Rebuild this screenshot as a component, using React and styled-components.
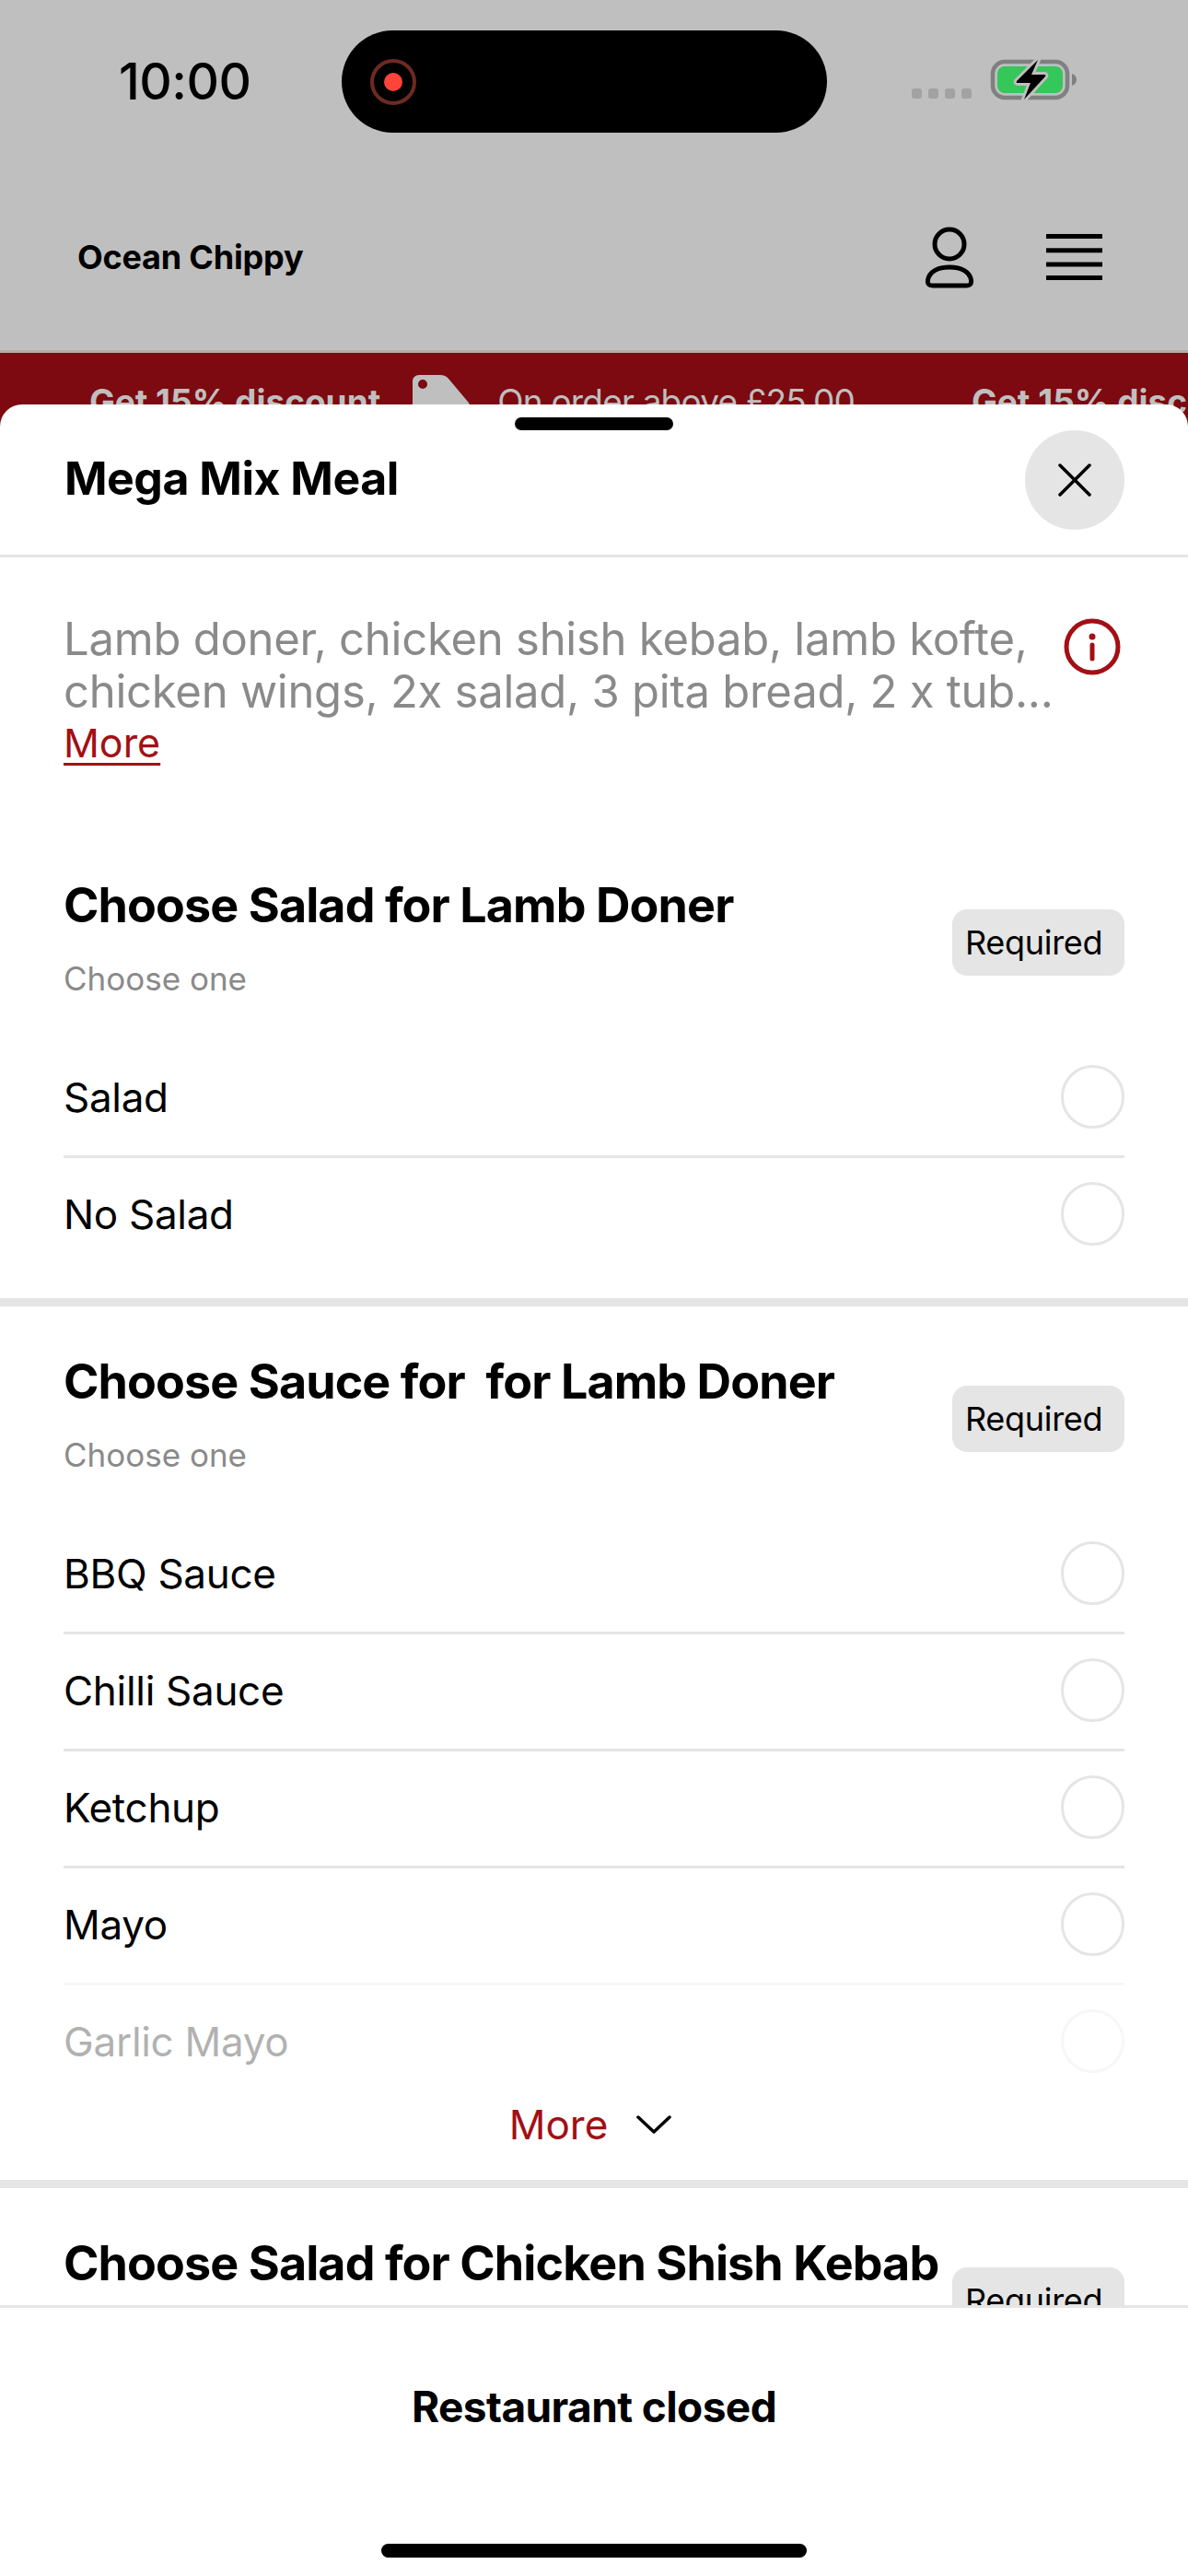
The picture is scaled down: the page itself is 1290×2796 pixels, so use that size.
import React from "react";
import styled, { createGlobalStyle } from "styled-components";

const Global = createGlobalStyle`
  html, body { margin: 0; padding: 0; background: #bfbfbf; }
  * { box-sizing: border-box; }
  body { font-family: Inter, "Liberation Sans", sans-serif; }
`;

const Page = styled.div`
  position: relative;
  width: 1290px;
  height: 2796px;
  overflow: hidden;
  background: #bfbfbf;
`;

const StatusBar = styled.div`
  display: grid;
  grid-template-columns: 371px 527px 1fr;
  height: 180px;
  padding-top: 33px;
`;

const Time = styled.div`
  padding-left: 129px;
  padding-top: 22px;
  font-size: 55px;
  line-height: 66px;
  font-weight: 500;
  letter-spacing: -0.5px;
  color: #000;
`;

const Island = styled.div`
  height: 111px;
  border-radius: 56px;
  background: #000;
  display: flex;
  align-items: center;
  padding-left: 31px;
`;

const RecDot = styled.div`
  width: 50px;
  height: 50px;
  border-radius: 50%;
  border: 4px solid #6e2a22;
  display: flex;
  align-items: center;
  justify-content: center;
  &::after {
    content: "";
    width: 20px;
    height: 20px;
    border-radius: 50%;
    background: #ff453a;
  }
`;

const StatusRight = styled.div`
  display: flex;
  align-items: flex-start;
  padding-left: 92px;
  padding-top: 29px;
`;

const Signal = styled.div`
  display: flex;
  gap: 7px;
  margin-top: 34px;
  margin-right: 19px;
`;

const SignalDot = styled.span`
  display: block;
  width: 11px;
  height: 11px;
  border-radius: 3px;
  background: #a2a2a2;
`;

const Header = styled.header`
  display: flex;
  align-items: center;
  justify-content: space-between;
  height: 203px;
  padding: 0 93px 3px 84px;
  border-bottom: 3px solid #b9a9a9;
`;

const Brand = styled.div`
  font-size: 36px;
  font-weight: 700;
  color: #000;
  letter-spacing: -0.2px;
`;

const HeaderIcons = styled.div`
  display: flex;
  align-items: center;
  gap: 78px;
`;

const Banner = styled.div`
  display: flex;
  align-items: flex-start;
  height: 100px;
  padding: 30px 0 0 97px;
  background: #7c0a10;
  color: #bfbfbf;
  font-size: 37px;
  line-height: 46px;
  white-space: nowrap;
  overflow: hidden;
`;

const BannerStrong = styled.span`
  font-weight: 700;
  margin-right: 35px;
`;

const BannerText = styled.span`
  font-weight: 400;
  letter-spacing: -0.8px;
  margin-right: 127px;
`;

const TagIcon = styled.svg`
  flex: none;
  margin: -6px 30px 0 0;
`;

const Sheet = styled.section`
  position: absolute;
  left: 0;
  right: 0;
  top: 439px;
  bottom: 0;
  display: flex;
  flex-direction: column;
  background: #fff;
  border-radius: 24px 24px 0 0;
  overflow: hidden;
`;

const Handle = styled.div`
  position: absolute;
  top: 14px;
  left: 559px;
  width: 172px;
  height: 14px;
  border-radius: 7px;
  background: #000;
`;

const SheetHeader = styled.div`
  flex: none;
  display: flex;
  align-items: center;
  justify-content: space-between;
  height: 166px;
  padding: 0 69px 0 70px;
  border-bottom: 3px solid #e5e5e5;
`;

const SheetTitle = styled.h1`
  margin: -3px 0 0;
  font-size: 50px;
  font-weight: 700;
  color: #000;
  letter-spacing: -0.5px;
`;

const CloseButton = styled.div`
  width: 108px;
  height: 108px;
  border-radius: 50%;
  background: #e5e5e5;
  display: flex;
  align-items: center;
  justify-content: center;
`;

const Scroll = styled.div`
  flex: 1;
  min-height: 0;
  overflow: hidden;
`;

const Intro = styled.div`
  display: flex;
  justify-content: space-between;
  align-items: flex-start;
  padding: 60px 69px 119px 69px;
`;

const IntroText = styled.div`
  width: 1080px;
`;

const Description = styled.p`
  margin: 0;
  font-size: 49px;
  line-height: 57px;
  color: #8a8a8a;
  letter-spacing: -0.25px;
  white-space: pre-line;
`;

const MoreLink = styled.span`
  display: block;
  font-size: 43px;
  line-height: 55px;
  color: #a30f14;
  text-decoration: underline;
  text-decoration-thickness: 3px;
  text-underline-offset: 6px;
`;

const InfoIcon = styled.svg`
  flex: none;
  margin: 6px 4px 0 0;
`;

const Group = styled.div`
  padding: ${(p) => (p.$first ? 0 : 52)}px 69px ${(p) => p.$pb}px 69px;
  border-top: ${(p) => (p.$first ? 0 : 9)}px solid #e5e5e5;
`;

const GroupHead = styled.div`
  display: flex;
  justify-content: space-between;
  align-items: flex-start;
  margin-bottom: 43px;
`;

const GroupTitle = styled.h2`
  margin: 0;
  font-size: 52px;
  line-height: 60px;
  font-weight: 700;
  color: #000;
  letter-spacing: -0.9px;
  white-space: pre;
`;

const GroupHint = styled.div`
  margin-top: 27px;
  font-size: 35px;
  line-height: 44px;
  color: #8a8a8a;
`;

const Pill = styled.div`
  flex: none;
  width: 187px;
  height: 72px;
  margin-top: 34px;
  padding-left: 14px;
  border-radius: 16px;
  background: #e5e5e5;
  display: flex;
  align-items: center;
  font-size: 36px;
  letter-spacing: -0.3px;
  color: #000;
`;

const Rows = styled.div`
  ${(p) => (p.$clip ? `height: ${p.$clip}px; overflow: hidden;` : "")}
`;

const Row = styled.div`
  display: flex;
  align-items: center;
  justify-content: space-between;
  height: 127px;
  font-size: 44px;
  letter-spacing: -0.3px;
  color: #000;
  opacity: ${(p) => (p.$faded ? 0.3 : 1)};
  &:not(:first-child) {
    box-shadow: inset 0 3px 0 #e5e5e5;
  }
`;

const Radio = styled.span`
  flex: none;
  width: 69px;
  height: 69px;
  border-radius: 50%;
  border: 3.5px solid #e5e5e5;
  background: #fff;
`;

const ShowMore = styled.div`
  display: flex;
  align-items: center;
  justify-content: center;
  gap: 31px;
  height: 60px;
  margin: 26px 0 30px;
  padding-right: 8px;
  font-size: 44px;
  color: #a30f14;
`;

const Footer = styled.footer`
  flex: none;
  height: 294px;
  border-top: 3px solid #e5e5e5;
  background: #fff;
  display: flex;
  flex-direction: column;
  align-items: center;
  padding-top: 74px;
`;

const ClosedLabel = styled.div`
  font-size: 46px;
  line-height: 66px;
  font-weight: 700;
  color: #000;
  letter-spacing: -0.6px;
`;

const HomeBar = styled.div`
  width: 462px;
  height: 15px;
  margin-top: 116px;
  border-radius: 8px;
  background: #000;
`;

const sections = [
  {
    title: "Choose Salad for Lamb Doner",
    rows: ["Salad", "No Salad"],
  },
  {
    title: "Choose Sauce for  for Lamb Doner",
    rows: ["BBQ Sauce", "Chilli Sauce", "Ketchup", "Mayo", "Garlic Mayo"],
    collapsed: true,
  },
  {
    title: "Choose Salad for Chicken Shish Kebab",
    rows: ["Salad", "No Salad"],
  },
];

const Battery = () => (
  <svg width="96" height="50" viewBox="1075 62 96 50">
    <rect x="1079" y="67" width="81" height="39" rx="13" fill="none" stroke="#808080" strokeWidth="4.5" />
    <rect x="1084" y="72" width="71" height="29" rx="8" fill="#34c759" />
    <path d="M1165 80c3 1 5 3 5 6.500s-2 5.500-5 6.500z" fill="#808080" />
    <path
      d="M1128 65 1105 88q-1 2 1 2h14l-7 18 23-25q1-2-1-2h-14l7-16z"
      fill="#000"
      stroke="#bfbfbf"
      strokeWidth="6"
      strokeLinejoin="round"
      paintOrder="stroke"
    />
  </svg>
);

const Person = () => (
  <svg width="54" height="68" viewBox="0 0 54 68" fill="none" stroke="#000" strokeWidth="5">
    <circle cx="27" cy="20" r="16" />
    <path d="M27 45c-13 0-22 5-23.500 14-.5 4 1 6 5 6h37c4 0 5.500-2 5-6C49 50 40 45 27 45z" />
  </svg>
);

const Burger = () => (
  <svg width="61" height="50" viewBox="0 0 61 50" fill="#000">
    <rect y="0" width="61" height="5" />
    <rect y="15.300" width="61" height="5" />
    <rect y="30.500" width="61" height="5" />
    <rect y="45" width="61" height="5" />
  </svg>
);

const Tag = () => (
  <TagIcon width="62" height="60" viewBox="0 0 62 60">
    <path
      fillRule="evenodd"
      d="M7 0h23c4 0 6 1 9 4l21 25c3 3 2 6 0 9L32 60H6L0 50V7C0 3 3 0 7 0zM11 5a5 5 0 1 0 0 10 5 5 0 0 0 0-10z"
      fill="#bfbfbf"
    />
  </TagIcon>
);

export default function App() {
  return (
    <Page>
      <Global />
      <StatusBar>
        <Time>10:00</Time>
        <Island>
          <RecDot />
        </Island>
        <StatusRight>
          <Signal>
            <SignalDot />
            <SignalDot />
            <SignalDot />
            <SignalDot />
          </Signal>
          <Battery />
        </StatusRight>
      </StatusBar>
      <Header>
        <Brand>Ocean Chippy</Brand>
        <HeaderIcons>
          <Person />
          <Burger />
        </HeaderIcons>
      </Header>
      <Banner>
        <BannerStrong>Get 15% discount</BannerStrong>
        <Tag />
        <BannerText>On order above £25.00</BannerText>
        <BannerStrong>Get 15% discount</BannerStrong>
      </Banner>

      <Sheet>
        <Handle />
        <SheetHeader>
          <SheetTitle>Mega Mix Meal</SheetTitle>
          <CloseButton>
            <svg width="36" height="36" viewBox="0 0 36 36" stroke="#000" strokeWidth="3.5" strokeLinecap="round">
              <path d="M2 2l32 32M34 2 2 34" />
            </svg>
          </CloseButton>
        </SheetHeader>
        <Scroll>
          <Intro>
            <IntroText>
              <Description>
                {"Lamb doner, chicken shish kebab, lamb kofte,\nchicken wings, 2x salad, 3 pita bread, 2 x tub..."}
              </Description>
              <MoreLink>More</MoreLink>
            </IntroText>
            <InfoIcon width="62" height="62" viewBox="0 0 62 62" fill="none" stroke="#a30f14">
              <circle cx="31" cy="31" r="28" strokeWidth="5" />
              <path d="M31 29v15" strokeWidth="5" strokeLinecap="round" />
              <circle cx="31" cy="20" r="3.500" fill="#a30f14" stroke="none" />
            </InfoIcon>
          </Intro>
          {sections.map((s, i) => (
            <Group key={s.title} $first={i === 0} $pb={s.collapsed ? 0 : 28}>
              <GroupHead>
                <div>
                  <GroupTitle>{s.title}</GroupTitle>
                  <GroupHint>Choose one</GroupHint>
                </div>
                <Pill>Required</Pill>
              </GroupHead>
              <Rows $clip={s.collapsed ? 606 : 0}>
                {s.rows.map((r, j) => (
                  <Row key={r} $faded={s.collapsed && j === s.rows.length - 1}>
                    {r}
                    <Radio />
                  </Row>
                ))}
              </Rows>
              {s.collapsed && (
                <ShowMore>
                  More
                  <svg width="38" height="22" viewBox="0 0 38 22" fill="none" stroke="#000" strokeWidth="3.5" strokeLinecap="round" strokeLinejoin="round">
                    <path d="M2 3l17 16L36 3" />
                  </svg>
                </ShowMore>
              )}
            </Group>
          ))}
        </Scroll>
        <Footer>
          <ClosedLabel>Restaurant closed</ClosedLabel>
          <HomeBar />
        </Footer>
      </Sheet>
    </Page>
  );
}
